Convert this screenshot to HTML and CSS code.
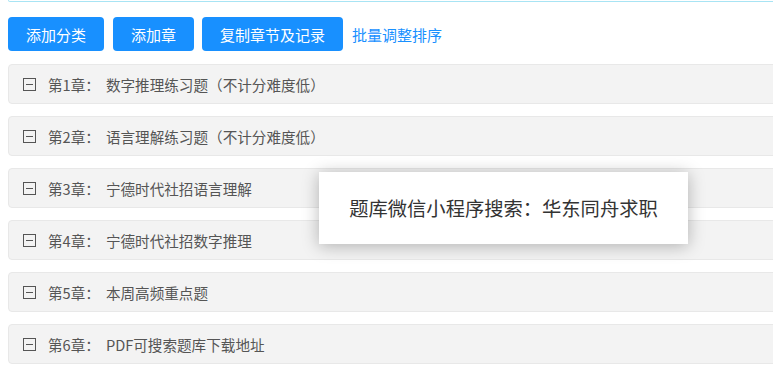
FILE: index.html
```html
<!DOCTYPE html>
<html lang="zh-CN">
<head>
    <meta charset="UTF-8">
    <meta name="viewport" content="width=device-width, initial-scale=1.0">
    <title>章节管理</title>
    <link rel="stylesheet" href="styles.css">
</head>
<body>
    <div class="page">
        <div class="search-box"></div>

        <div class="toolbar">
            <button class="btn">添加分类</button>
            <button class="btn">添加章</button>
            <button class="btn">复制章节及记录</button>
            <a class="link" href="#">批量调整排序</a>
        </div>

        <ul class="chapter-list">
            <li class="chapter">
                <svg class="fold" width="13" height="13" viewBox="0 0 13 13"><rect x="0.5" y="0.5" width="12" height="12" fill="none" stroke="#555"/><line x1="3" y1="6.5" x2="10" y2="6.5" stroke="#555"/></svg>
                <span class="num">第1章：</span>
                <span class="name">数字推理练习题（不计分难度低）</span>
            </li>
            <li class="chapter">
                <svg class="fold" width="13" height="13" viewBox="0 0 13 13"><rect x="0.5" y="0.5" width="12" height="12" fill="none" stroke="#555"/><line x1="3" y1="6.5" x2="10" y2="6.5" stroke="#555"/></svg>
                <span class="num">第2章：</span>
                <span class="name">语言理解练习题（不计分难度低）</span>
            </li>
            <li class="chapter">
                <svg class="fold" width="13" height="13" viewBox="0 0 13 13"><rect x="0.5" y="0.5" width="12" height="12" fill="none" stroke="#555"/><line x1="3" y1="6.5" x2="10" y2="6.5" stroke="#555"/></svg>
                <span class="num">第3章：</span>
                <span class="name">宁德时代社招语言理解</span>
            </li>
            <li class="chapter">
                <svg class="fold" width="13" height="13" viewBox="0 0 13 13"><rect x="0.5" y="0.5" width="12" height="12" fill="none" stroke="#555"/><line x1="3" y1="6.5" x2="10" y2="6.5" stroke="#555"/></svg>
                <span class="num">第4章：</span>
                <span class="name">宁德时代社招数字推理</span>
            </li>
            <li class="chapter">
                <svg class="fold" width="13" height="13" viewBox="0 0 13 13"><rect x="0.5" y="0.5" width="12" height="12" fill="none" stroke="#555"/><line x1="3" y1="6.5" x2="10" y2="6.5" stroke="#555"/></svg>
                <span class="num">第5章：</span>
                <span class="name">本周高频重点题</span>
            </li>
            <li class="chapter">
                <svg class="fold" width="13" height="13" viewBox="0 0 13 13"><rect x="0.5" y="0.5" width="12" height="12" fill="none" stroke="#555"/><line x1="3" y1="6.5" x2="10" y2="6.5" stroke="#555"/></svg>
                <span class="num">第6章：</span>
                <span class="name">PDF可搜索题库下载地址</span>
            </li>
        </ul>
    </div>

    <!-- toast message -->
    <div class="toast">题库微信小程序搜索：华东同舟求职</div>
</body>
</html>
```

FILE: styles.css
```css
body {
    margin: 0;
    font-family: "Microsoft YaHei", "Noto Sans CJK SC", sans-serif;
    background-color: #fff;
    overflow: hidden;
}

.page {
    padding: 0 0 0 8px;
    width: 800px;
}

.search-box {
    height: 1px;
    border: 1px solid #a8e4f4;
    border-top: none;
    border-radius: 0 0 4px 4px;
}

.toolbar {
    display: flex;
    align-items: center;
    margin-top: 15px;
}

.btn {
    height: 34px;
    padding: 0 18px;
    margin-right: 9px;
    border: none;
    border-radius: 4px;
    background-color: #1890ff;
    color: #fff;
    font-family: inherit;
    font-size: 15px;
    cursor: pointer;
}

.btn:nth-child(2) {
    margin-right: 8px;
}

.link {
    color: #1890ff;
    font-size: 15px;
    text-decoration: none;
}

.chapter-list {
    list-style: none;
    margin: 13px 0 0;
    padding: 0;
}

.chapter {
    display: flex;
    align-items: center;
    height: 38px;
    margin-bottom: 12px;
    padding-left: 14px;
    background-color: #f3f3f3;
    border: 1px solid #e8e8e8;
    border-radius: 4px;
    color: #555;
    font-size: 14.6px;
}

.fold {
    flex: none;
    margin-right: 12px;
}

.num {
    margin-right: 6px;
}

.toast {
    position: absolute;
    left: 319px;
    top: 172px;
    width: 369px;
    height: 72px;
    display: flex;
    align-items: center;
    justify-content: center;
    background-color: #fff;
    box-shadow: 0 2px 16px rgba(0, 0, 0, 0.28);
    color: #333;
    font-size: 19.3px;
}
```
